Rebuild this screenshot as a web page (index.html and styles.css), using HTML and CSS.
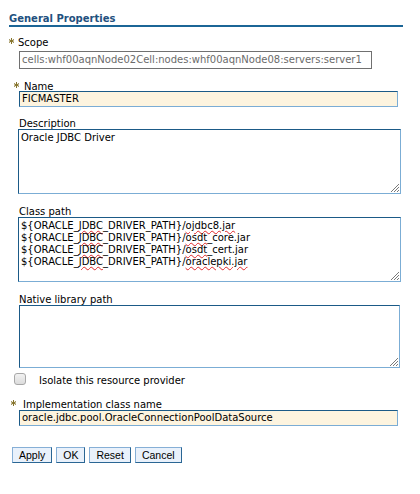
FILE: index.html
```html
<!DOCTYPE html>
<html lang="en">
<head>
<meta charset="utf-8">
<title>General Properties</title>
<link rel="stylesheet" href="styles.css">
</head>
<body>
<div class="panel">
  <h2 class="title">General Properties</h2>

  <div class="field field-scope">
    <label class="label label-scope"><svg class="star" width="5" height="6" viewBox="0 0 5 6"><path d="M2.5 0V6M0 1.5L5 4.5M0 4.5L5 1.5M0.5 3H4.5"/></svg>Scope</label>
    <div class="input input-readonly">cells:whf00aqnNode02Cell:nodes:whf00aqnNode08:servers:server1</div>
  </div>

  <div class="field field-name">
    <label class="label label-name"><svg class="star" width="5" height="6" viewBox="0 0 5 6"><path d="M2.5 0V6M0 1.5L5 4.5M0 4.5L5 1.5M0.5 3H4.5"/></svg>Name</label>
    <div class="input input-req">FICMASTER</div>
  </div>

  <div class="field field-gap">
    <label class="label">Description</label>
    <div class="ta">Oracle JDBC Driver<svg class="grip" width="9" height="9" viewBox="0 0 9 9"><path d="M9 1L1 9M9 4L4 9M9 7L7 9"/></svg></div>
  </div>

  <div class="field field-gap2">
    <label class="label">Class path</label>
    <div class="ta">${ORACLE_<span class="sp">JDBC</span>_DRIVER_PATH}/<span class="sp">ojdbc8.jar</span><br>${ORACLE_<span class="sp">JDBC</span>_DRIVER_PATH}/<span class="sp">osdt</span>_core.jar<br>${ORACLE_<span class="sp">JDBC</span>_DRIVER_PATH}/<span class="sp">osdt</span>_cert.jar<br>${ORACLE_<span class="sp">JDBC</span>_DRIVER_PATH}/<span class="sp">oraclepki.jar</span><svg class="grip" width="9" height="9" viewBox="0 0 9 9"><path d="M9 1L1 9M9 4L4 9M9 7L7 9"/></svg></div>
  </div>

  <div class="field field-gap2">
    <label class="label">Native library path</label>
    <div class="ta ta-native"><svg class="grip" width="9" height="9" viewBox="0 0 9 9"><path d="M9 1L1 9M9 4L4 9M9 7L7 9"/></svg></div>
  </div>

  <div class="check-row">
    <span class="checkbox"></span>
    <span class="check-text">Isolate this resource provider</span>
  </div>

  <div class="field field-impl">
    <label class="label label-impl"><svg class="star" width="5" height="6" viewBox="0 0 5 6"><path d="M2.5 0V6M0 1.5L5 4.5M0 4.5L5 1.5M0.5 3H4.5"/></svg>Implementation class name</label>
    <div class="input input-req">oracle.jdbc.pool.OracleConnectionPoolDataSource</div>
  </div>

  <div class="buttons">
    <button class="btn">Apply</button>
    <button class="btn">OK</button>
    <button class="btn">Reset</button>
    <button class="btn">Cancel</button>
  </div>
</div>
</body>
</html>
```

FILE: styles.css
```css
body {
  margin: 0;
  background: #ffffff;
  color: #000000;
  font-family: "DejaVu Sans", Verdana, sans-serif;
  font-size: 10px;
}

.panel {
  padding: 13px 0 0 9px;
  width: 394px;
}

.title {
  margin: 0;
  font-size: 10px;
  font-weight: bold;
  line-height: 12px;
  height: 12px;
  color: #22507e;
  border-bottom: 2px solid #1b6596;
}

.field {
  margin-left: 10px;
}

.field-scope { margin-top: 10px; }
.field-name { margin-top: 12px; }
.field-gap { margin-top: 11px; }
.field-gap2 { margin-top: 12px; }
.field-impl { margin-top: 12px; }

.label {
  display: block;
  height: 12px;
  line-height: 12px;
  white-space: nowrap;
}

.star {
  fill: none;
  stroke: #86742c;
  stroke-width: 1;
  vertical-align: 2px;
}

.label-scope { margin-left: -10px; }
.label-scope .star { margin-right: 4px; }
.label-name { margin-left: -5px; }
.label-name .star { margin-right: 5px; }
.label-impl { margin-left: -8px; }
.label-impl .star { margin-right: 7px; }

.input {
  box-sizing: border-box;
  white-space: nowrap;
  overflow: hidden;
  padding: 0 2px;
}

.input-readonly {
  width: 353px;
  height: 18px;
  margin-top: 2px;
  line-height: 16px;
  border: 1px solid #707070;
  color: #6b6b6b;
  background: #ffffff;
}

.input-req {
  width: 379px;
  height: 16px;
  margin-top: -2px;
  line-height: 14px;
  border: 1px solid;
  border-color: #1b5a87 #7badd5 #7badd5 #1b5a87;
  background: #fdf4df;
}

.field-impl .input-req { margin-top: -1px; }

.ta {
  position: relative;
  box-sizing: border-box;
  width: 383px;
  height: 65px;
  margin: -1px 0 0 -1px;
  padding: 2px;
  line-height: 12px;
  white-space: nowrap;
  border: 1px solid;
  border-color: #1b5a87 #7badd5 #7badd5 #1b5a87;
  background: #ffffff;
}

.ta-native {
  width: 381px;
  height: 63px;
  margin-left: 0;
}

.grip {
  position: absolute;
  right: 1px;
  bottom: 1px;
  fill: none;
  stroke: #7a7a7a;
  stroke-width: 1;
}

.sp {
  text-decoration: underline wavy #e0282a;
  text-decoration-thickness: 1px;
  text-underline-offset: 1px;
}

.check-row {
  display: flex;
  margin: 5px 0 0 5px;
  height: 14px;
}

.checkbox {
  box-sizing: border-box;
  width: 12px;
  height: 12px;
  border: 1px solid #a8a8a8;
  border-radius: 3px;
  background: linear-gradient(#f2f2f2, #dcdcdc);
}

.check-text {
  margin-left: 13px;
  padding-top: 2px;
  line-height: 12px;
}

.buttons {
  display: flex;
  gap: 4px;
  margin: 21px 0 0 3px;
}

.btn {
  box-sizing: border-box;
  height: 16px;
  margin: 0;
  padding: 0 6px;
  font-family: "Liberation Sans", Arial, sans-serif;
  font-size: 10.5px;
  line-height: 14px;
  color: #000000;
  background: #e9f1fb;
  border: 1px solid;
  border-color: #86afd6 #2a6694 #2a6694 #86afd6;
  border-radius: 0;
}
```
